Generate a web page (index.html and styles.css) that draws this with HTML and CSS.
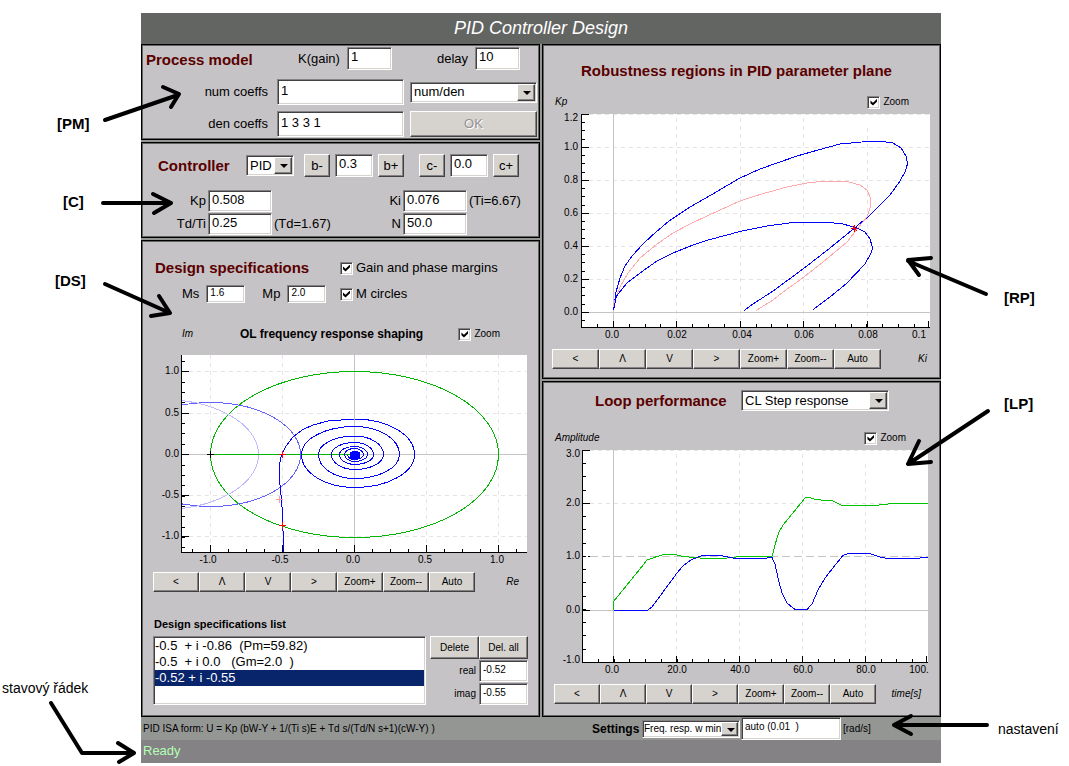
FILE: index.html
```html
<!DOCTYPE html>
<html lang="en">
<head>
<meta charset="utf-8">
<title>PID Controller Design</title>
<link rel="stylesheet" href="styles.css">
</head>
<body>
<div class="page">
  <aside class="notes notes-left" lang="cs">
    <span class="note tag note-pm">[PM]</span>
    <span class="note tag note-c">[C]</span>
    <span class="note tag note-ds">[DS]</span>
    <span class="note note-status">stavový řádek</span>
    <svg class="arrows" width="200" height="766" viewBox="0 0 200 766" aria-hidden="true">
      <path d="M105 120L178 95M163 87L179 94L171 107"/>
      <path d="M103 203H171M153 194L171 203L154 213"/>
      <path d="M105 284L170 313M159 296L170 313L151 316"/>
      <path d="M51 703L82 753H134M118 743L134 753L119 762"/>
    </svg>
  </aside>

  <main class="app">
    <h1 class="app-title">PID Controller Design</h1>
    <div class="columns">
      <div class="column">
        <section class="panel model">
          <div class="model-top">
            <h2>Process model</h2>
            <label class="field">K(gain) <input class="w45" type="text" value="1"></label>
            <label class="field delay">delay <input class="w45" type="text" value="10"></label>
          </div>
          <div class="model-grid">
            <label for="num">num coeffs</label>
            <input id="num" type="text" value="1">
            <span class="drop"><select aria-label="Model form"><option>num/den</option></select></span>
            <label for="den">den coeffs</label>
            <input id="den" type="text" value="1 3 3 1">
            <button type="button" disabled>OK</button>
          </div>
        </section>

        <section class="panel controller">
          <div class="controller-top">
            <h2>Controller</h2>
            <span class="drop type"><select aria-label="Controller type"><option>PID</option></select></span>
            <div class="stepper">
              <button type="button">b-</button>
              <input type="text" value="0.3" aria-label="b">
              <button type="button">b+</button>
            </div>
            <div class="stepper">
              <button type="button">c-</button>
              <input type="text" value="0.0" aria-label="c">
              <button type="button">c+</button>
            </div>
          </div>
          <div class="controller-grid">
            <label for="kp">Kp</label><input id="kp" type="text" value="0.508"><span></span>
            <label for="ki">Ki</label><input id="ki" type="text" value="0.076"><span>(Ti=6.67)</span>
            <label for="td">Td/Ti</label><input id="td" type="text" value="0.25"><span>(Td=1.67)</span>
            <label for="n">N</label><input id="n" type="text" value="50.0"><span></span>
          </div>
        </section>

        <section class="panel design">
          <div class="design-grid">
            <h2>Design specifications</h2>
            <label class="check"><input type="checkbox" checked> Gain and phase margins</label>
            <div class="limits">
              <label class="field">Ms <input class="small" type="text" value="1.6"></label>
              <label class="field">Mp <input class="small" type="text" value="2.0"></label>
            </div>
            <label class="check"><input type="checkbox" checked> M circles</label>
          </div>
          <div class="plot-head ol">
            <em>Im</em>
            <h3>OL frequency response shaping</h3>
            <label class="check small"><input type="checkbox" checked> Zoom</label>
          </div>
          <svg class="plot" viewBox="142 345 397 225" role="img" aria-label="Open loop frequency response">
            <clipPath id="ol-area"><rect x="181" y="355" width="346" height="197"/></clipPath>
            <rect class="area" x="181" y="355" width="346" height="197"/>
            <path class="grid" d="M189 371.5H527M189 413.5H527M189 495.5H527M189 536.5H527M210.500 355V545M282.500 355V545M426.500 355V545M498.500 355V545"/>
            <path class="zero" d="M189 454.500H527M354.500 355V552"/>
            <g clip-path="url(#ol-area)">
              <ellipse class="green" cx="354.500" cy="454.500" rx="144" ry="83"/>
              <ellipse class="violet" cx="210.500" cy="454.500" rx="90" ry="52"/>
              <ellipse class="lilac" cx="162.500" cy="454.500" rx="96" ry="55"/>
              <path class="green" d="M211 454.500H354"/>
              <path class="blue" d="M283.500 552V537L282.500 525V514L281.500 500L280.500 490L279.500 480V465L281.500 455L286 446L293 437L302 430L313 425L328 421L354.500 419A60 35.500 0 0 1 414.500 454.500A60 33 0 0 1 354.500 487.500A53 33 0 0 1 301.500 454.500A53 28 0 0 1 354.500 426.500A45 28 0 0 1 399.500 454.500A45 24 0 0 1 354.500 478.500A36 24 0 0 1 318.500 454.500A36 18.500 0 0 1 354.500 436A29 18.500 0 0 1 383.500 454.500A29 15 0 0 1 354.500 469.500A23 15 0 0 1 331.500 454.500A23 12 0 0 1 354.500 442.500A19 12 0 0 1 373.500 454.500A19 10 0 0 1 354.500 464.500A15 10 0 0 1 339.500 454.500A15 8 0 0 1 354.500 446.500A13 8 0 0 1 367.500 454.500A13 7 0 0 1 354.500 461.500A10 7 0 0 1 344.500 454.500A10 6 0 0 1 354.500 448.500A9 6 0 0 1 363.500 454.500A9 5 0 0 1 354.500 459.500A7 5 0 0 1 347.500 454.500"/>
              <path class="core" d="M350 452h2v-1h5v1h2v5h-2v1h-5v-1h-2z"/>
            </g>
            <path class="axis" d="M207 454.500h7M210.500 451v7"/>
            <path class="red" d="M279 454.500h7M282.500 451v7M279 525.500h7M282.500 522v7"/>
            <path class="rose" d="M276 499.500h7M279.500 496v7"/>
            <path class="axis" d="M181.500 355V552.500H527M181 371.500h8M181 413.500h8M181 454.500h8M181 495.500h8M181 536.500h8M210.500 552v-7M282.500 552v-7M354.500 552v-7M426.500 552v-7M498.500 552v-7"/>
            <path class="ticks" stroke-dasharray="1 9.350" d="M183.500 361V550"/>
            <path class="ticks" stroke-dasharray="1 17" d="M192 550.500H520"/>
            <g class="ylab"><text x="179" y="374">1.0</text><text x="179" y="416">0.5</text><text x="179" y="457">0.0</text><text x="179" y="498">-0.5</text><text x="179" y="539">-1.0</text></g>
            <g class="xlab"><text x="208" y="563">-1.0</text><text x="280" y="563">-0.5</text><text x="353" y="563">0.0</text><text x="425" y="563">0.5</text><text x="497" y="563">1.0</text></g>
          </svg>
          <div class="strip ol">
            <button type="button">&lt;</button><button type="button">Λ</button><button type="button">V</button><button type="button">&gt;</button><button type="button">Zoom+</button><button type="button">Zoom--</button><button type="button">Auto</button>
            <em>Re</em>
          </div>
          <h3 class="list-title" id="list-title">Design specifications list</h3>
          <div class="spec">
            <select class="list" size="4" aria-labelledby="list-title">
              <option>-0.5&nbsp; + i -0.86&nbsp; (Pm=59.82)</option>
              <option>-0.5&nbsp; + i 0.0&nbsp;&nbsp; (Gm=2.0&nbsp; )</option>
              <option selected>-0.52 + i -0.55</option>
            </select>
            <div class="spec-edit">
              <button type="button">Delete</button><button type="button">Del. all</button>
              <label for="re">real</label><input id="re" type="text" value="-0.52">
              <label for="im">imag</label><input id="im" type="text" value="-0.55">
            </div>
          </div>
        </section>
      </div>

      <div class="column">
        <section class="panel robust">
          <h2>Robustness regions in PID parameter plane</h2>
          <div class="plot-head rp">
            <em>Kp</em>
            <label class="check small"><input type="checkbox" checked> Zoom</label>
          </div>
          <svg class="plot" viewBox="543 110 397 236" role="img" aria-label="Robustness regions">
            <rect class="area" x="582" y="114" width="348" height="213"/>
            <path class="grid" d="M589 114.500H930M589 147.500H930M589 180.500H930M589 213.500H930M589 246.500H930M589 279.500H930M676.500 118V320M740.500 118V320M803.500 118V320M867.500 128V320"/>
            <path class="zero" d="M589 312.500H930M613.500 114V327"/>
            <path class="blue" d="M613.500 310L616 292L620 278L625 266L632 256L644 243L656 232L669 221L690 207L711 195L740 178L760 169L797 156L818 150L840 144L867 141.500H882L893 143L901 148L906.500 157L907.500 164L905 172L900 181L890 195L881 204L870 215L854 228.500L830 248L803 269L773 291L753 304L744 310.500"/>
            <path class="pink" d="M613.500 309L614 303L620 287L628 273L640 258L657 244L673 233L690 224L707 216L740 201L760 194.500L787 187L807 183L820 181.500H847L860 185L867 190L870.500 198V207L867 217L858 228L847 242L823 262L800 280L783 292L773 300L756 310.500"/>
            <path class="blue" d="M613.500 310L616.500 296L627 283L640 273L657 261L673 253L693 245L710 239.500L740 231.500L767 226L793 222.500H830L843 224L857 228L865 232L870 239L872 246V250L870.500 254L865 264L847 283L830 297L813 309.500"/>
            <path class="red" d="M851 228.500h6M854.500 225v7M852 226l5 5"/>
            <path class="axis" d="M581.500 114V327.500H930M582 114.500h7M582 147.500h7M582 180.500h7M582 213.500h7M582 246.500h7M582 279.500h7M582 312.500h7M613.500 327v-6M676.500 327v-6M740.500 327v-6M803.500 327v-6M867.500 327v-6M928.500 327v-6"/>
            <path class="ticks" stroke-dasharray="1 7.250" d="M583.500 122V324"/>
            <path class="ticks" stroke-dasharray="1 14.850" d="M597 325.500H920"/>
            <g class="ylab"><text x="578" y="121">1.2</text><text x="578" y="150">1.0</text><text x="578" y="183">0.8</text><text x="578" y="216">0.6</text><text x="578" y="249">0.4</text><text x="578" y="282">0.2</text><text x="578" y="315">0.0</text></g>
            <g class="xlab"><text x="612" y="338">0.0</text><text x="677" y="338">0.02</text><text x="742" y="338">0.04</text><text x="804" y="338">0.06</text><text x="868" y="338">0.08</text><text x="919" y="338">0.1</text></g>
          </svg>
          <div class="strip rp">
            <button type="button">&lt;</button><button type="button">Λ</button><button type="button">V</button><button type="button">&gt;</button><button type="button">Zoom+</button><button type="button">Zoom--</button><button type="button">Auto</button>
            <em>Ki</em>
          </div>
        </section>

        <section class="panel loop">
          <div class="loop-top">
            <h2>Loop performance</h2>
            <span class="drop"><select aria-label="Response"><option>CL Step response</option></select></span>
          </div>
          <div class="plot-head lp">
            <em>Amplitude</em>
            <label class="check small"><input type="checkbox" checked> Zoom</label>
          </div>
          <svg class="plot" viewBox="543 446 397 235" role="img" aria-label="Closed loop step response">
            <rect class="area" x="583" y="450" width="345" height="212"/>
            <path class="grid" d="M590 450.500H928M590 503.500H928M676.500 454V655M739.500 454V655M802.500 454V655M865.500 464V655"/>
            <path class="level" d="M590 556.500H928"/>
            <path class="zero" d="M590 610.500H928M613.500 450V662"/>
            <path class="leaf" d="M613.500 610V601.500L644 564L647 560L657 556.500L664 554.500H675L683 556.500L700 558H727L740 556.500H772L775 545L778.500 533L783 525L788 519L805 498L810 497.500L815 499.500L833 501L842 505.500H874L893 503.500H928"/>
            <path class="blue" d="M613.500 610.500H647L652 607L677 573L683 566L691 560L697 557.500L702 555.500H720L733 558H767L772 557.500L775 564L778.500 580L782 593L787 603L795 609.500H807L812 604L818 590L825 578L836 564L843 555.500L850 553H868L878 556.500L887 558.500H913L928 557.500"/>
            <path class="axis" d="M582.500 450V662.500H928M583 450.500h7M583 503.500h7M583 556.500h3M588 556.500h2M583 610.500h7M613.500 662v-6M676.500 662v-6M739.500 662v-6M802.500 662v-6M865.500 662v-6M926.500 662v-6"/>
            <path class="ticks" stroke-dasharray="1 12.250" d="M584.500 463V658"/>
            <path class="ticks" stroke-dasharray="1 14.700" d="M598 660.500H920"/>
            <g class="ylab"><text x="580" y="457">3.0</text><text x="580" y="506">2.0</text><text x="580" y="559">1.0</text><text x="580" y="613">0.0</text><text x="580" y="663">-1.0</text></g>
            <g class="xlab"><text x="612" y="673">0.0</text><text x="677" y="673">20.0</text><text x="740" y="673">40.0</text><text x="803" y="673">60.0</text><text x="866" y="673">80.0</text><text x="919" y="673">100.</text></g>
          </svg>
          <div class="strip lp">
            <button type="button">&lt;</button><button type="button">Λ</button><button type="button">V</button><button type="button">&gt;</button><button type="button">Zoom+</button><button type="button">Zoom--</button><button type="button">Auto</button>
            <em>time[s]</em>
          </div>
        </section>
      </div>
    </div>

    <div class="settings">
      <span class="formula">PID ISA form: U = Kp (bW-Y + 1/(Ti s)E + Td s/(Td/N s+1)(cW-Y) )</span>
      <div class="settings-edit">
        <h3>Settings</h3>
        <span class="drop low"><select aria-label="Setting"><option>Freq. resp. w min</option></select></span>
        <input type="text" value="auto (0.01  )" aria-label="Setting value">
        <span>[rad/s]</span>
      </div>
    </div>
    <div class="status" role="status">Ready</div>
  </main>

  <aside class="notes notes-right" lang="cs">
    <span class="note tag note-rp">[RP]</span>
    <span class="note tag note-lp">[LP]</span>
    <span class="note note-settings">nastavení</span>
    <svg class="arrows" width="189" height="766" viewBox="880 0 189 766" aria-hidden="true">
      <path d="M986 294L908 261M931 258L908 260L919 275"/>
      <path d="M988 411L908 464M919 441L908 464L931 462"/>
      <path d="M987 725H894M911 716L894 725L911 734"/>
    </svg>
  </aside>
</div>
</body>
</html>
```

FILE: styles.css
```css
* { box-sizing: border-box; }

body {
  margin: 0;
  background: #fff;
  color: #000;
  font: 13px/16px "Liberation Sans", Arial, sans-serif;
}

h1, h2, h3 { margin: 0; }
h2 { font-size: 15px; line-height: 20px; color: #5a0000; white-space: nowrap; }
h3 { font-size: 11px; line-height: 14px; }
label, span { white-space: nowrap; }

.page {
  display: grid;
  grid-template-columns: 141px minmax(0, 1fr) 128px;
}

/* annotations beside the window */
.notes { position: relative; z-index: 1; pointer-events: none; }
.note { position: absolute; font-size: 14px; }
.tag { font-size: 15px; font-weight: bold; }
.note-pm { left: 57px; top: 116px; }
.note-c { left: 63px; top: 194px; }
.note-ds { left: 55px; top: 273px; }
.note-status { left: 2px; top: 680px; }
.note-rp { left: 63px; top: 290px; }
.note-lp { left: 63px; top: 396px; }
.note-settings { left: 57px; top: 721px; }
.arrows {
  position: absolute;
  top: 0;
  fill: none;
  stroke: #000;
  stroke-width: 4;
  stroke-linecap: round;
  stroke-linejoin: round;
}
.notes-left .arrows { left: 0; }
.notes-right .arrows { right: 0; }

/* window */
.app { margin: 13px 0 3px; background: #949694; }
.app-title {
  padding: 5px 0 6px;
  background: #636563;
  color: #fff;
  font: italic 18px/20px "Liberation Sans", Arial, sans-serif;
  text-align: center;
}
.columns {
  display: grid;
  grid-template-columns: minmax(0, 1fr) minmax(0, 1fr);
  gap: 2px;
}
.column { display: flex; flex-direction: column; gap: 2px; }
.panel {
  border: 1px solid #000;
  box-shadow: inset 0 0 0 1px #636563;
  background: #c6c3c6;
}
.column .panel:last-child { flex: 1; }

/* controls */
input, button, select { font: inherit; color: #000; border-radius: 0; min-width: 0; margin: 0; }
input[type="text"],
.drop select,
.list,
.check input {
  border: 1px solid;
  border-color: #848284 #fff #fff #848284;
  background: #fff;
  box-shadow: inset 1px 1px #424142, inset -1px -1px #d6d3ce;
}
input[type="text"] { padding: 1px 3px 5px; }
button,
.drop::before {
  border: 1px solid;
  border-color: #fff #424142 #424142 #fff;
  background: #d6d3ce;
  box-shadow: inset -1px -1px #848284;
}
button { padding: 0; white-space: nowrap; }
button:disabled { color: #949294; text-shadow: 1px 1px #fff; }

.drop { position: relative; display: block; }
.drop select {
  display: block;
  width: 100%;
  height: 21px;
  padding: 0 18px 0 3px;
  appearance: none;
}
.drop::before {
  content: "";
  position: absolute;
  top: 2px; right: 2px; bottom: 2px;
  width: 16px;
  pointer-events: none;
}
.drop::after {
  content: "";
  position: absolute;
  top: 9px; right: 6px;
  border: 4px solid transparent;
  border-top-color: #000;
  border-bottom: 0;
  pointer-events: none;
}

.check { display: flex; align-items: center; gap: 3px; }
.check.small { font-size: 10px; }
.check input {
  width: 13px;
  height: 13px;
  appearance: none;
}
.check input:checked::before {
  content: "";
  display: block;
  width: 7px;
  height: 7px;
  margin: 2px;
  background: #000;
  clip-path: polygon(0 28%, 36% 62%, 100% 0, 100% 40%, 36% 100%, 0 68%);
}
.field { display: flex; align-items: center; gap: 7px; }
.w45 { width: 45px; }

/* process model */
.model { padding: 2px 2px 2px 4px; }
.model-top { display: flex; align-items: center; margin-right: 17px; }
.model-top h2 { flex: 1; padding-top: 3px; }
.model-top input { height: 23px; }
.delay { margin-left: 45px; }
.model-grid {
  display: grid;
  grid-template-columns: 1fr 127px 127px;
  grid-auto-rows: 26px;
  gap: 6px;
  align-items: center;
  margin-top: 9px;
}
.model-grid label { justify-self: end; padding-right: 3px; }
.model-grid input, .model-grid button { height: 26px; }

/* controller */
.controller { padding: 11px 0 2px; }
.controller-top { display: flex; align-items: center; padding-left: 16px; }
.controller-top h2 { width: 88px; }
.type { width: 48px; margin-right: 10px; }
.stepper { display: flex; gap: 5px; margin-right: 15px; }
.stepper input { width: 38px; }
.stepper input, .stepper button { height: 23px; }
.stepper button { width: 26px; }
.controller-grid {
  display: grid;
  grid-template-columns: 64px 64px 1fr 24px 64px 70px;
  grid-auto-rows: 22px;
  gap: 1px 2px;
  align-items: center;
  margin-top: 13px;
}
.controller-grid label { justify-self: end; }
.controller-grid input { height: 22px; }

/* design specifications */
.design { padding: 17px 0 11px; }
.design-grid {
  display: grid;
  grid-template-columns: 198px 1fr;
  grid-template-rows: 20px 18px;
  row-gap: 7px;
}
.design-grid h2 { padding-left: 13px; }
.limits { display: flex; gap: 17px; padding-left: 40px; }
.small { font-size: 10px; }
input[type="text"].small { width: 39px; height: 18px; }
.plot-head {
  display: flex;
  align-items: center;
  justify-content: space-between;
  height: 16px;
  padding: 0 31px 0 12px;
}
.plot-head em, .strip em { font-size: 10px; }
.plot-head.ol { margin: 23px 0 3px; padding: 0 39px 0 40px; }
.plot-head.ol em { width: 58px; }
.plot-head h3 { margin-right: auto; font-size: 12px; }
.plot-head.lp { padding-right: 34px; }

.plot { display: block; width: 100%; height: auto; shape-rendering: crispEdges; }
.plot path, .plot ellipse { fill: none; stroke-width: 1; }
.area { fill: #fff; }
.plot .grid { stroke: #e7e3e7; stroke-dasharray: 4 4; }
.plot .level { stroke: #c6c3c6; stroke-dasharray: 8 4; }
.plot .zero { stroke: #c6c3c6; }
.plot .axis { stroke: #000; }
.plot .ticks { stroke: #000; stroke-width: 3; }
.plot .green { stroke: #00b600; }
.plot .leaf { stroke: #00c300; }
.plot .blue { stroke: #0000ff; }
.plot .violet { stroke: #6361ff; }
.plot .lilac { stroke: #bdbaff; }
.plot .pink { stroke: #ffaaad; }
.plot .red { stroke: #ff0000; }
.plot .rose { stroke: #ff9a9c; }
.plot .core { fill: #0000ff; stroke: #0000ff; }
.plot text { font-size: 10px; }
.ylab { text-anchor: end; }
.xlab { text-anchor: middle; }

.strip { display: flex; align-items: center; font-size: 10px; margin-top: 3px; }
.strip button { width: 46px; height: 20px; }
.strip em { margin-left: auto; }
.strip.ol { margin-top: 2px; padding: 0 20px 0 11px; }
.strip.rp { padding: 0 13px 0 9px; }
.strip.rp button { width: 47px; }
.strip.lp { padding: 0 19px 0 11px; }

.list-title { margin: 25px 0 5px 12px; }
.spec { display: flex; gap: 4px; padding: 0 11px; }
.list {
  flex: 1;
  height: 69px;
  padding: 1px;
  overflow: hidden;
}
.list option { height: 16px; min-height: 16px; padding: 0; line-height: 16px; }
.list option:checked {
  background: linear-gradient(#08246b, #08246b);
  -webkit-text-fill-color: #fff;
}
.spec-edit {
  display: grid;
  grid-template-columns: 49px 49px;
  grid-template-rows: 23px 22px 22px;
  row-gap: 1px;
  align-items: center;
  font-size: 10px;
}
.spec-edit button { height: 23px; }
.spec-edit label { justify-self: end; padding-right: 3px; }
.spec-edit input { height: 22px; }

/* robustness and loop plots */
.robust { padding: 16px 0 9px; }
.robust h2 { margin-bottom: 13px; padding-right: 10px; text-align: center; }
.loop { padding: 8px 0 11px; }
.loop-top { display: flex; align-items: center; justify-content: space-between; margin: 0 51px 19px 52px; }
.loop-top .drop { width: 148px; }

/* footer */
.settings {
  display: grid;
  grid-template-columns: minmax(0, 1fr) minmax(0, 1fr);
  gap: 2px;
  align-items: center;
  font-size: 10px;
}
.formula { padding-left: 2px; }
.settings-edit { display: flex; align-items: center; gap: 1px; padding-left: 50px; }
.settings-edit h3 { width: 49px; font-size: 12px; }
.settings-edit input { width: 100px; height: 23px; margin-right: 1px; }
.low { width: 98px; }
.drop.low select { height: 18px; padding: 0 15px 0 1px; }
.drop.low::before { width: 15px; }
.drop.low::after { top: 8px; right: 5px; }
.status {
  height: 23px;
  padding: 3px 2px;
  background: #848284;
  color: #b5ffb5;
}
```
